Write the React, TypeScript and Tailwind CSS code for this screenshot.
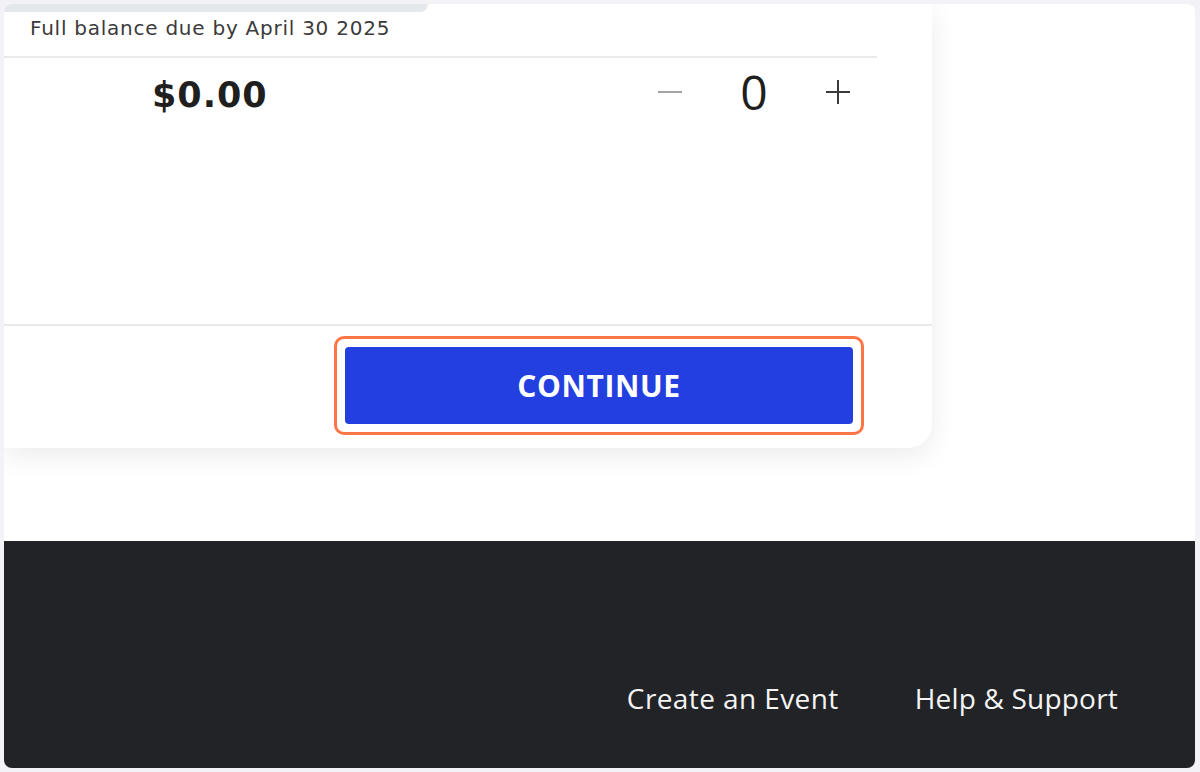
export default function App(): JSX.Element {
  return (
    <div className="w-[1200px] h-[772px] bg-[#f3f2f7] pt-[4px] pb-[4px] pl-[4px] pr-[5px] font-['Open_Sans',sans-serif]">
      <div className="h-full flex flex-col bg-white rounded-[8px] overflow-hidden">
        <main className="h-[537px] flex flex-col">
          <section className="w-[928px] flex flex-col bg-white rounded-br-[24px] shadow-[0_8px_28px_rgba(0,0,0,0.08)]">
            <div className="pr-[55px]">
              <div className="h-[8px] w-[424px] bg-[#e4e7eb] rounded-br-[8px]" />
              <div className="h-[46px] pt-[5px] pl-[26px] border-b-2 border-[#e9e9ec]">
                <p className="font-['DejaVu_Sans',sans-serif] text-[20px] leading-[22px] tracking-[0.75px] text-[#3b3b3b]">Full balance due by April 30 2025</p>
              </div>
              <div className="h-[266px]">
                <div className="h-[74px] flex items-center justify-between pl-[148px] pr-[26px]">
                  <span className="font-['DejaVu_Sans',sans-serif] font-bold text-[35px] leading-[40px] tracking-[1px] text-[#1f1f1f]">$0.00</span>
                  <div className="-mt-[6px] flex items-center">
                    <button type="button" className="w-[26px] h-[26px] flex items-center justify-center">
                      <svg width="26" height="26" viewBox="0 0 26 26" fill="none">
                        <path d="M1 13h24" stroke="#a3a3a3" strokeWidth="2" />
                      </svg>
                    </button>
                    <span className="w-[142px] text-center text-[48px] leading-[50px] text-[#1f1f1f]">0</span>
                    <button type="button" className="w-[26px] h-[26px] flex items-center justify-center">
                      <svg width="26" height="26" viewBox="0 0 26 26" fill="none">
                        <path d="M1 13h24M13 1v24" stroke="#3a3a3a" strokeWidth="2" />
                      </svg>
                    </button>
                  </div>
                </div>
              </div>
            </div>
            <div className="border-t-2 border-[#e9e9ec] h-[124px] pt-[10px] pr-[68px] flex justify-end">
              <div className="h-[99px] p-[8px] border-[3px] border-[#ff7545] rounded-[10px]">
                <button type="button" className="w-[508px] h-[77px] rounded-[4px] bg-[#233fe0] text-white font-bold text-[30px] tracking-[0.6px]">
                  CONTINUE
                </button>
              </div>
            </div>
          </section>
        </main>
        <footer className="flex-1 bg-[#222327] flex items-end justify-end gap-[76px] pr-[77px] pb-[51px]">
          <a className="text-[28px] leading-[38px] font-medium tracking-[0.4px] text-[#f4f4f4]">Create an Event</a>
          <a className="text-[28px] leading-[38px] font-medium tracking-[0.2px] text-[#f4f4f4]">Help &amp; Support</a>
        </footer>
      </div>
    </div>
  )
}
